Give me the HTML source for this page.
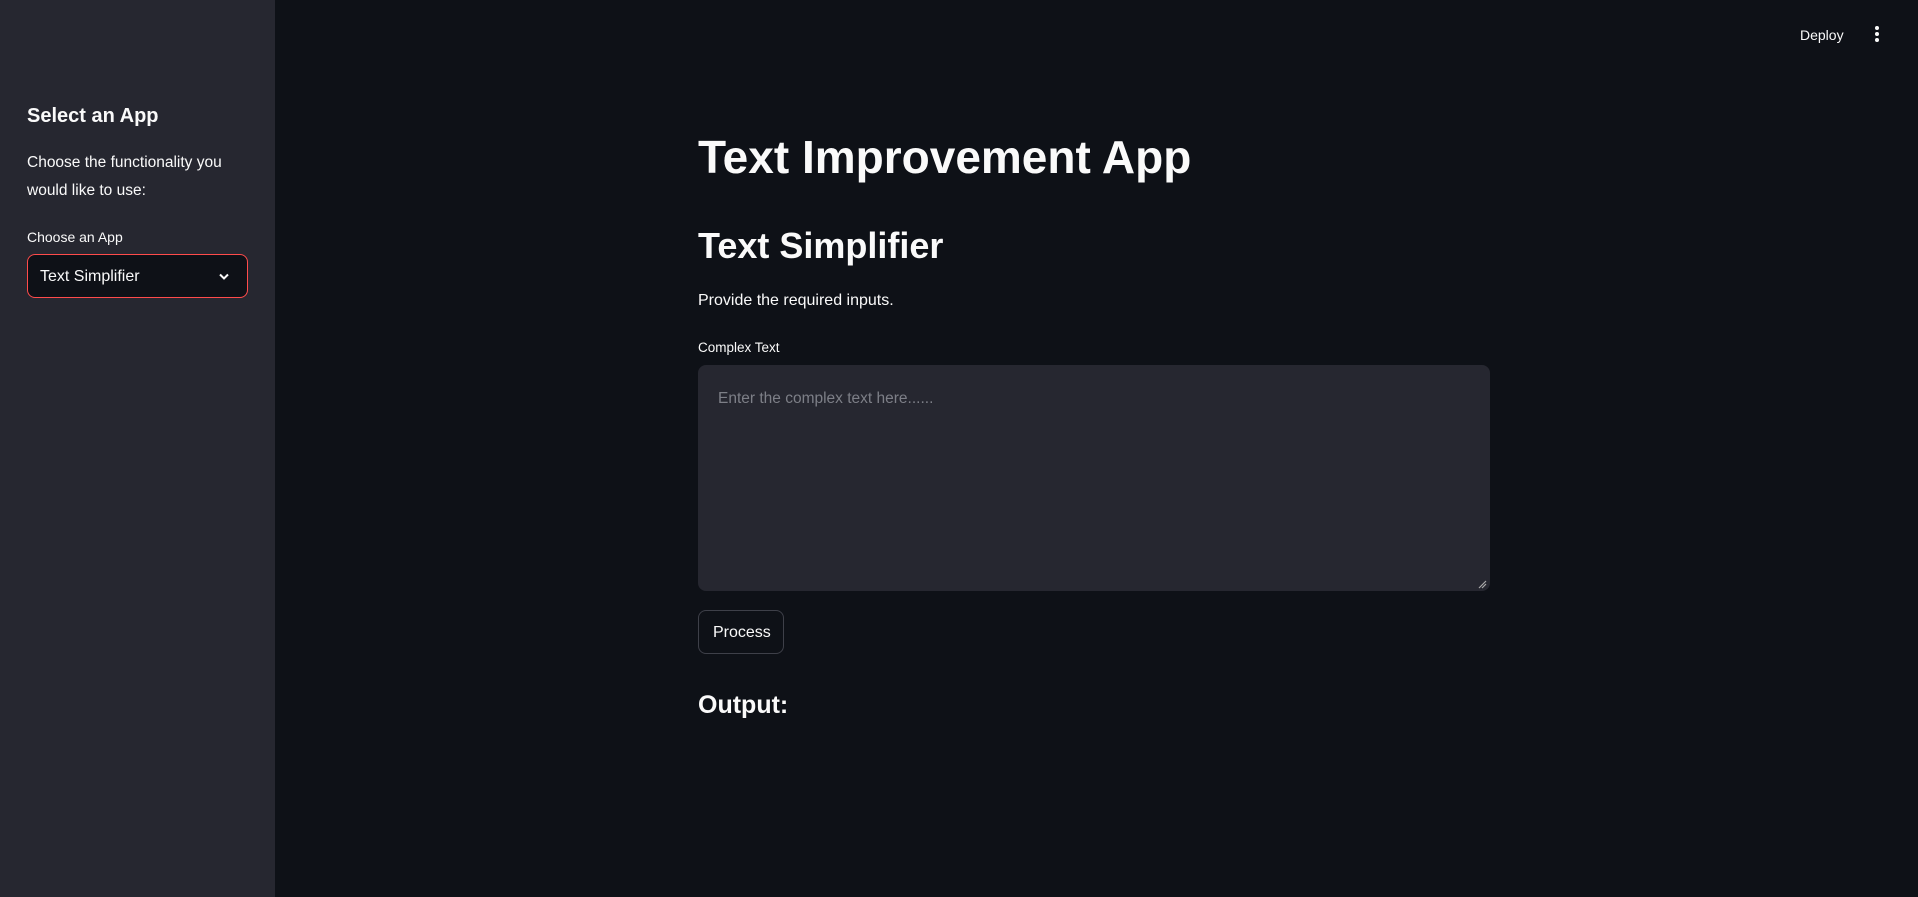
<!DOCTYPE html>
<html><head><meta charset="utf-8"><style>
*{margin:0;padding:0;box-sizing:border-box}
body{width:1918px;height:897px;background:#0e1117;font-family:"Liberation Sans",sans-serif;color:#fafafa;position:relative;overflow:hidden}
.sb{position:absolute;left:0;top:0;width:275px;height:897px;background:#262730}
.a{position:absolute;white-space:nowrap}
</style></head><body>
<div class="sb"></div>
<div class="a" style="left:27px;top:105px;font-size:20px;font-weight:700">Select an App</div>
<div class="a" style="left:27px;top:149px;font-size:15.5px;line-height:28px">Choose the functionality you<br>would like to use:</div>
<div class="a" style="left:27px;top:229px;font-size:14px">Choose an App</div>
<div class="a" style="left:27px;top:254px;width:221px;height:44px;background:#0e1117;border:1px solid #ff4b4b;border-radius:8px"></div>
<div class="a" style="left:40px;top:268px;font-size:16px">Text Simplifier</div>
<svg class="a" style="left:217px;top:271px" width="14" height="12" viewBox="0 0 14 12"><path d="M3 3.5l4 4 4-4" fill="none" stroke="#fafafa" stroke-width="2"/></svg>
<div class="a" style="left:1800px;top:27px;font-size:14px">Deploy</div>
<div class="a" style="left:1875px;top:26px;width:4px;height:4px;border-radius:2px;background:#fafafa"></div>
<div class="a" style="left:1875px;top:32px;width:4px;height:4px;border-radius:2px;background:#fafafa"></div>
<div class="a" style="left:1875px;top:38px;width:4px;height:4px;border-radius:2px;background:#fafafa"></div>
<div class="a" style="left:698px;top:130px;font-size:46px;font-weight:700">Text Improvement App</div>
<div class="a" style="left:698px;top:225px;font-size:36px;font-weight:700">Text Simplifier</div>
<div class="a" style="left:698px;top:292px;font-size:16px">Provide the required inputs.</div>
<div class="a" style="left:698px;top:340px;font-size:13.5px">Complex Text</div>
<div class="a" style="left:698px;top:365px;width:792px;height:226px;background:#262730;border-radius:8px"></div>
<div class="a" style="left:718px;top:390px;font-size:15.5px;color:#7d7f87">Enter the complex text here......</div>
<svg class="a" style="left:1478px;top:580px" width="9" height="9"><path d="M1 8L8 1M4 8L8 4" stroke="#aaa" stroke-width="1.2"/></svg>
<div class="a" style="left:698px;top:610px;width:86px;height:44px;border:1px solid #3e4049;border-radius:8px"></div>
<div class="a" style="left:713px;top:624px;font-size:16px">Process</div>
<div class="a" style="left:698px;top:691px;font-size:25px;font-weight:700">Output:</div>
</body></html>
